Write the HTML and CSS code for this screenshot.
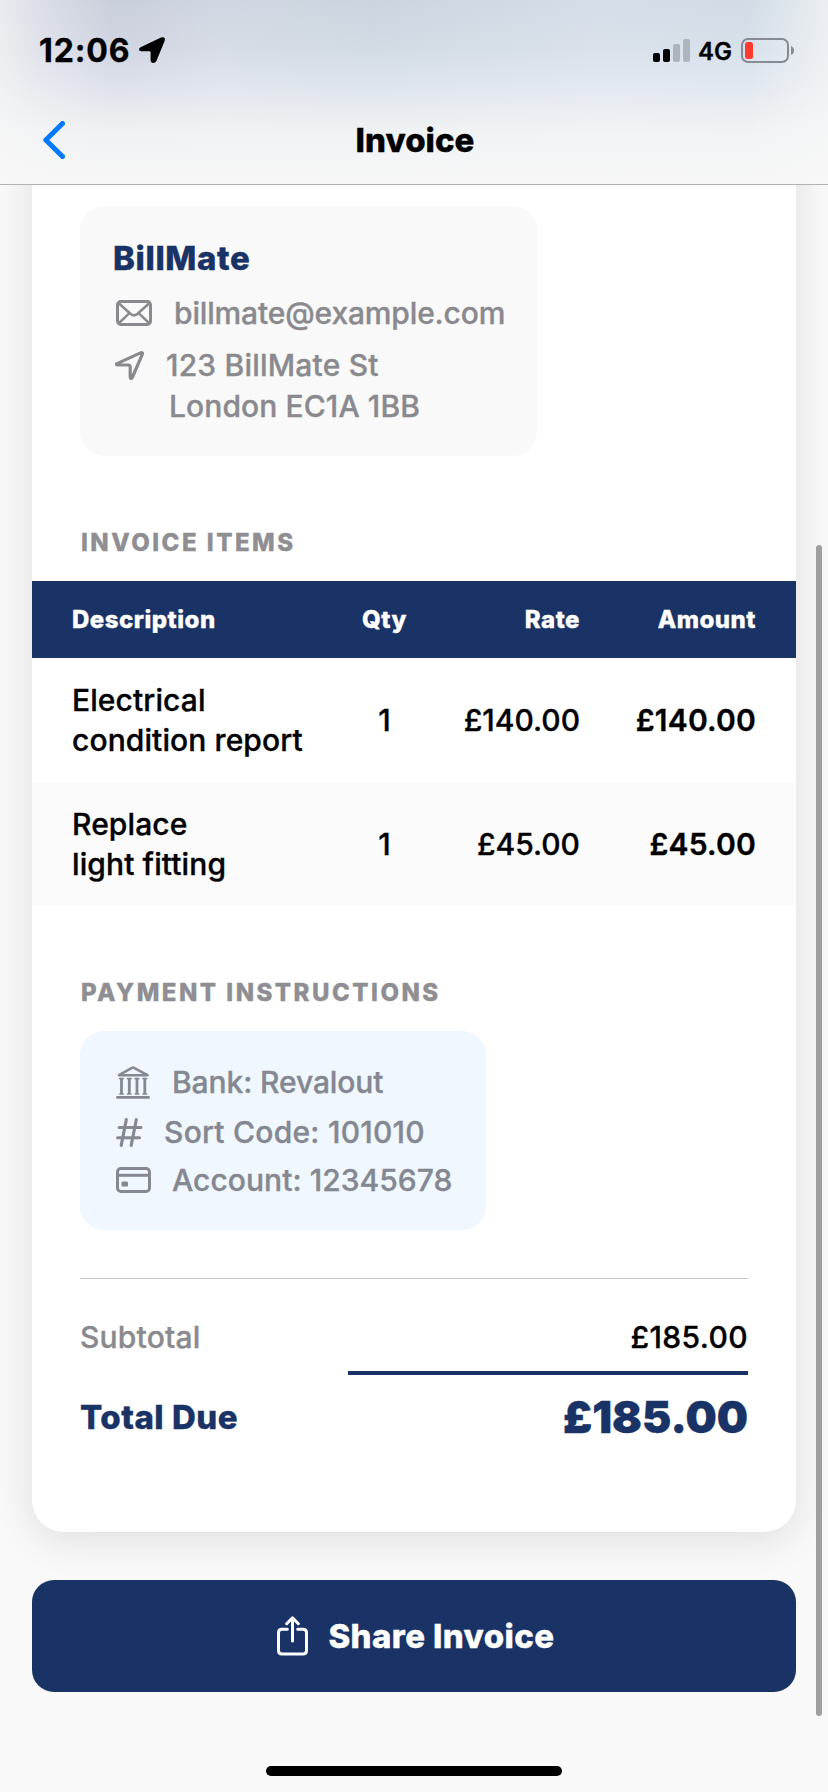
FILE: index.html
```
<!DOCTYPE html>
<html lang="en">
<head>
    <meta charset="UTF-8">
    <meta name="viewport" content="width=device-width, initial-scale=1.0">
    <title>Invoice</title>
    <link rel="stylesheet" href="styles.css">
</head>
<body>

<header class="header">
    <div class="status-bar">
        <span class="time">12:06</span>
        <svg class="location" width="26" height="26" viewBox="0 0 26 26"><path d="M1.6 10.2 L22 0.6 Q27 -1 25.6 4 L17.4 24 Q16.4 26 14 26 Q11.6 25.8 11.6 23.4 V15.4 Q11.6 14.2 10.4 14.2 H2.4 Q0 14.2 0 12.2 Q0 11 1.6 10.2Z" fill="#000"/></svg>
        <svg class="signal" width="37" height="23" viewBox="0 0 37 23">
            <rect x="0" y="14" width="7" height="9" rx="2"/>
            <rect x="10" y="10" width="7" height="13" rx="2"/>
            <rect x="20" y="5" width="7" height="18" rx="2" fill="#adb4bd"/>
            <rect x="30" y="0" width="7" height="23" rx="2" fill="#adb4bd"/>
        </svg>
        <span class="network">4G</span>
        <svg class="battery" width="54" height="25" viewBox="0 0 54 25">
            <rect x="1" y="1" width="46" height="23" rx="6" fill="none" stroke="#868b93" stroke-width="2"/>
            <rect x="4" y="4" width="8" height="17" rx="2.5" fill="#ff3a2f"/>
            <path d="M50 8 Q53 9 53 12.5 Q53 16 50 17Z" fill="#868b93"/>
        </svg>
    </div>
    <div class="nav-bar">
        <svg class="back" width="22" height="38" viewBox="0 0 22 38"><path d="M19.5 2.5 L2.8 19 L19.5 35.5" fill="none" stroke="#007aff" stroke-width="5" stroke-linecap="round" stroke-linejoin="round"/></svg>
        <h1 class="nav-title">Invoice</h1>
    </div>
</header>

<main class="content">
    <section class="card">
        <div class="company">
            <h2 class="company-name">BillMate</h2>
            <div class="line email">
                <svg width="36" height="26" viewBox="0 0 36 26" fill="none" stroke="#8a8a8e" stroke-width="3" stroke-linejoin="round"><rect x="1.5" y="1.5" width="33" height="23" rx="3.2"/><path d="M2.5 3 L14.7 14 Q18 16.8 21.3 14 L33.5 3 M2.5 23.5 L13.3 13.2 M33.5 23.5 L22.7 13.2" stroke-width="2.5"/></svg>
                <span>billmate@example.com</span>
            </div>
            <div class="line street">
                <svg width="29" height="29" viewBox="0 0 29 29"><path d="M2 12.6 L25.5 1.9 Q28.2 1 27.2 3.6 L17.3 26.5 Q15.5 28.8 15.2 26 V16 Q15.2 14 13.2 14 H2.6 Q0.6 13.6 2 12.6Z" fill="none" stroke="#8a8a8e" stroke-width="3.2" stroke-linejoin="round"/></svg>
                <span>123 BillMate St</span>
            </div>
            <div class="line city">London EC1A 1BB</div>
        </div>

        <h3 class="section-title items-title">INVOICE ITEMS</h3>
        <table class="items">
            <thead>
                <tr><th class="desc">Description</th><th class="qty">Qty</th><th class="rate">Rate</th><th class="amount">Amount</th></tr>
            </thead>
            <tbody>
                <tr><td class="desc">Electrical<br>condition report</td><td class="qty">1</td><td class="rate">£140.00</td><td class="amount">£140.00</td></tr>
                <tr><td class="desc">Replace<br>light fitting</td><td class="qty">1</td><td class="rate">£45.00</td><td class="amount">£45.00</td></tr>
            </tbody>
        </table>

        <h3 class="section-title payment-title">PAYMENT INSTRUCTIONS</h3>
        <div class="payment">
            <div class="line bank">
                <svg width="34" height="33" viewBox="0 0 34 33" fill="none" stroke="#858891" stroke-width="2.6" stroke-linecap="round" stroke-linejoin="round"><path d="M3 9.2 L16 1.8 Q17 1.3 18 1.8 L31.5 9.2Z"/><path d="M1.4 31.4 H32.6" stroke-width="2.8"/><path d="M5.5 12.5 V28 M13.3 12.5 V28 M21 12.5 V28 M28.8 12.5 V28" stroke-width="2.8" stroke-linecap="butt"/><path d="M3.7 12.6 H7.3 M11.5 12.6 H15.1 M19.2 12.6 H22.8 M27 12.6 H30.6 M3.7 28 H7.3 M11.5 28 H15.1 M19.2 28 H22.8 M27 28 H30.6" stroke-width="1.6"/></svg>
                <span>Bank: Revalout</span>
            </div>
            <div class="line sort">
                <svg width="27" height="29" viewBox="0 0 27 29" fill="none" stroke="#858891" stroke-width="3.1" stroke-linecap="round"><path d="M10.3 1.6 L5.2 27.4 M20.3 1.6 L15.2 27.4 M3.2 9.5 H25 M1.6 19.8 H23.5"/></svg>
                <span>Sort Code: 101010</span>
            </div>
            <div class="line account">
                <svg width="35" height="26" viewBox="0 0 35 26" fill="none" stroke="#858891" stroke-width="3"><rect x="1.5" y="1.5" width="32" height="23" rx="3.4"/><path d="M2 8.3 H33"/><rect x="5.5" y="14.6" width="6.5" height="5" rx="1.2" fill="#858891" stroke="none"/></svg>
                <span>Account: 12345678</span>
            </div>
        </div>

        <div class="totals">
            <div class="subtotal"><span class="subtotal-label">Subtotal</span><span class="subtotal-value">£185.00</span></div>
            <div class="rule"></div>
            <div class="total"><span class="total-label">Total Due</span><span class="total-value">£185.00</span></div>
        </div>
    </section>

    <button type="button" class="share">
        <svg width="31" height="40" viewBox="0 0 31 40" fill="none" stroke="#fff" stroke-width="3" stroke-linecap="round" stroke-linejoin="round"><path d="M10.3 13.2 H5 Q1.5 13.2 1.5 16.8 V34.5 Q1.5 38 5 38 H26 Q29.5 38 29.5 34.5 V16.8 Q29.5 13.2 26 13.2 H20.7"/><path d="M15.5 25 V2.5 M9.7 7.7 L15.5 1.8 L21.3 7.7"/></svg>
        <span>Share Invoice</span>
    </button>
    <div class="home-indicator"></div>
</main>

<div class="scrollbar"></div>

</body>
</html>
```
FILE: styles.css
```
body {
    font-family: Inter, "Liberation Sans", sans-serif;
    margin: 0;
    width: 828px;
    height: 1792px;
    overflow: hidden;
    background-color: #f9f9f9;
    color: #000;
    font-size: 30px;
    font-weight: 500;
    -webkit-text-stroke: 0.35px;
}

h1, h2, h3 {
    margin: 0;
}

svg {
    display: block;
    flex: none;
}

/* header */
.header {
    position: relative;
    z-index: 1;
    box-sizing: border-box;
    height: 185px;
    border-bottom: 1px solid #b2b2b3;
    background:
        linear-gradient(to right, rgba(248, 248, 248, 0.7) 0, rgba(248, 248, 248, 0.4) 35px, rgba(248, 248, 248, 0) 110px),
        linear-gradient(to left, rgba(248, 248, 248, 0.65) 0, rgba(248, 248, 248, 0) 80px),
        linear-gradient(to bottom, rgba(240, 243, 250, 0) 0, rgba(240, 243, 250, 0.2) 50px, rgba(240, 243, 250, 0.5) 85px, rgba(244, 245, 247, 0.68) 108px, rgba(246, 247, 247, 0.85) 132px, #f7f7f7 184px),
        linear-gradient(to right, #cacfdc 0, #cacfdc 130px, #d1d7e2 220px, #cbd5df 370px, #d5dde8 600px, #d2dce6 720px);
}

.status-bar {
    display: flex;
    align-items: center;
    height: 100px;
    box-sizing: border-box;
    padding: 0 33px 0 39px;
}

.time {
    font-size: 32px;
    font-weight: 700;
    letter-spacing: 0.9px;
    width: 100px;
}

.signal {
    margin-left: auto;
}

.network {
    font-size: 24px;
    font-weight: 600;
    margin: 2px 9px 0 8px;
}

.nav-bar {
    display: flex;
    align-items: center;
    height: 80px;
    padding: 0 43px;
}

.nav-title {
    flex: 1;
    margin-right: 20px;
    text-align: center;
    font-size: 33px;
    font-weight: 800;
}

/* invoice card */
.content {
    padding: 0 32px;
}

.card {
    margin-top: -60px;
    height: 1407px;
    box-sizing: border-box;
    padding-top: 81px;
    background-color: #fff;
    border-radius: 32px;
    box-shadow: 0 8px 40px rgba(0, 0, 0, 0.11);
}

.company {
    width: 457px;
    height: 250px;
    box-sizing: border-box;
    margin-left: 48px;
    padding: 32px 0 0 32px;
    border-radius: 24px;
    background-color: #f9f9f9;
    color: #8a8a8e;
}

.company-name {
    line-height: 40px;
    padding-left: 1px;
    font-size: 33px;
    font-weight: 800;
    letter-spacing: 0.6px;
    color: #1a3366;
}

.line {
    display: flex;
    align-items: center;
    height: 40px;
    padding-left: 4px;
    white-space: nowrap;
}

.email {
    margin-top: 15px;
    gap: 22px;
    letter-spacing: -0.15px;
}

.street {
    margin-top: 12px;
    padding-left: 3px;
    gap: 22px;
    letter-spacing: 0.2px;
}

.city {
    height: 41px;
    padding-left: 57px;
    letter-spacing: 0.1px;
}

.section-title {
    margin-left: 49px;
    line-height: 32px;
    font-size: 24px;
    font-weight: 800;
    letter-spacing: 2.5px;
    color: #8e8e93;
}

.items-title {
    margin-top: 71px;
    margin-bottom: 22px;
}

.items {
    width: 764px;
    table-layout: fixed;
    border-collapse: collapse;
}

.items th {
    height: 77px;
    padding: 0;
    background-color: #1a3366;
    color: #fff;
    font-size: 24px;
    font-weight: 800;
    letter-spacing: 0.5px;
}

.items td {
    height: 124px;
    padding: 0;
    line-height: 40px;
}

.items tbody tr:nth-child(even) {
    background-color: #fbfbfb;
}

.items .desc {
    width: 262px;
    padding-left: 40px;
    text-align: left;
}

.items td.desc {
    letter-spacing: 0.1px;
}

.items .qty {
    width: 101px;
    text-align: center;
}

.items .rate {
    width: 145px;
    text-align: right;
}

.items .amount {
    padding-right: 40px;
    text-align: right;
}

.items td.amount {
    font-weight: 600;
    letter-spacing: 0.2px;
}

/* payment */
.payment-title {
    margin-top: 71px;
    margin-bottom: 22px;
}

.payment {
    width: 406px;
    height: 199px;
    box-sizing: border-box;
    margin-left: 48px;
    padding: 31px 0 0 32px;
    border-radius: 24px;
    background-color: #f0f7ff;
    color: #858891;
}

.bank {
    gap: 22px;
    letter-spacing: -0.1px;
}

.sort {
    margin-top: 10px;
    gap: 21px;
    letter-spacing: 0.25px;
}

.account {
    margin-top: 8px;
    gap: 21px;
    letter-spacing: 0.05px;
}

/* totals */
.totals {
    margin: 48px 48px 0;
    padding-top: 38px;
    border-top: 1px solid #c6c6c8;
}

.subtotal, .total {
    display: flex;
    align-items: center;
    justify-content: space-between;
    height: 40px;
}

.subtotal-label {
    color: #8a8a8e;
    letter-spacing: 0.2px;
}

.subtotal-value {
    letter-spacing: 0.4px;
}

.rule {
    width: 400px;
    height: 4px;
    margin: 14px 0 12px auto;
    background-color: #1a3366;
}

.total {
    height: 60px;
    color: #1a3366;
}

.total-label {
    font-size: 33px;
    font-weight: 800;
    letter-spacing: 0.5px;
}

.total-value {
    font-size: 44px;
    font-weight: 900;
}

.share {
    display: flex;
    align-items: center;
    justify-content: center;
    gap: 20px;
    width: 764px;
    height: 112px;
    margin-top: 48px;
    padding: 0 0 0 4px;
    border: none;
    border-radius: 22px;
    background-color: #1a3366;
    color: #fff;
    font-family: inherit;
    font-size: 33px;
    font-weight: 800;
    letter-spacing: 0.4px;
}

.home-indicator {
    width: 296px;
    height: 10px;
    margin: 74px auto 0;
    border-radius: 5px;
    background-color: #000;
}

/* scroll position marker over the page edge */
.scrollbar {
    position: absolute;
    top: 545px;
    left: 816px;
    width: 6px;
    height: 1171px;
    border-radius: 3px;
    background-color: #9f9f9f;
}
```
